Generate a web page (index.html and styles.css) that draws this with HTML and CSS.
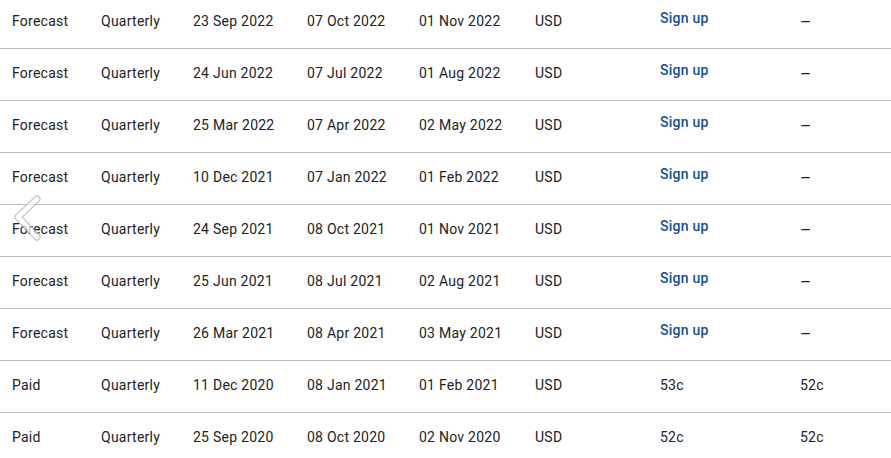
FILE: index.html
```html
<!DOCTYPE html>
<html>
<head>
<meta charset="utf-8">
<link rel="stylesheet" href="styles.css">
</head>
<body>
<div class="page">
  <div class="table">
    <div class="row"><span>Forecast</span><span>Quarterly</span><span>23 Sep 2022</span><span>07 Oct 2022</span><span>01 Nov 2022</span><span>USD</span><a class="signup">Sign up</a><span class="dash">–</span></div>
    <div class="row"><span>Forecast</span><span>Quarterly</span><span>24 Jun 2022</span><span>07 Jul 2022</span><span>01 Aug 2022</span><span>USD</span><a class="signup">Sign up</a><span class="dash">–</span></div>
    <div class="row"><span>Forecast</span><span>Quarterly</span><span>25 Mar 2022</span><span>07 Apr 2022</span><span>02 May 2022</span><span>USD</span><a class="signup">Sign up</a><span class="dash">–</span></div>
    <div class="row"><span>Forecast</span><span>Quarterly</span><span>10 Dec 2021</span><span>07 Jan 2022</span><span>01 Feb 2022</span><span>USD</span><a class="signup">Sign up</a><span class="dash">–</span></div>
    <div class="row"><span>Forecast</span><span>Quarterly</span><span>24 Sep 2021</span><span>08 Oct 2021</span><span>01 Nov 2021</span><span>USD</span><a class="signup">Sign up</a><span class="dash">–</span></div>
    <div class="row"><span>Forecast</span><span>Quarterly</span><span>25 Jun 2021</span><span>08 Jul 2021</span><span>02 Aug 2021</span><span>USD</span><a class="signup">Sign up</a><span class="dash">–</span></div>
    <div class="row"><span>Forecast</span><span>Quarterly</span><span>26 Mar 2021</span><span>08 Apr 2021</span><span>03 May 2021</span><span>USD</span><a class="signup">Sign up</a><span class="dash">–</span></div>
    <div class="row"><span>Paid</span><span>Quarterly</span><span>11 Dec 2020</span><span>08 Jan 2021</span><span>01 Feb 2021</span><span>USD</span><span>53c</span><span>52c</span></div>
    <div class="row"><span>Paid</span><span>Quarterly</span><span>25 Sep 2020</span><span>08 Oct 2020</span><span>02 Nov 2020</span><span>USD</span><span>52c</span><span>52c</span></div>
  </div>
  <svg class="prev" width="34" height="50" viewBox="0 0 34 50">
    <polyline points="26,6 7,24 26,44" fill="none" stroke="#9e9e9e" stroke-width="7" stroke-linecap="round" stroke-linejoin="round"/>
    <polyline points="26,6 7,24 26,44" fill="none" stroke="#ffffff" stroke-width="5" stroke-linecap="round" stroke-linejoin="round"/>
  </svg>
</div>
</body>
</html>
```

FILE: styles.css
```css
html, body {
  margin: 0;
  padding: 0;
  background: #ffffff;
}
body {
  font-family: Roboto, "Liberation Sans", sans-serif;
  font-size: 14px;
  letter-spacing: 0.25px;
  color: #222222;
  overflow: hidden;
}
.page {
  position: relative;
  width: 891px;
}
.table {
  margin-top: -3px;
}
.row {
  display: grid;
  grid-template-columns: 89px 92px 114px 112px 116px 125px 140px 1fr;
  align-items: center;
  height: 47px;
  padding: 0 0 4px 12px;
  border-bottom: 1px solid #bdbdbd;
}
.signup {
  color: #11508e;
  font-weight: 500;
  margin-bottom: 6px;
  cursor: pointer;
}
.dash {
  font-size: 17px;
  line-height: 14px;
  margin-top: 2px;
}
.prev {
  position: absolute;
  left: 11px;
  top: 196px;
  opacity: 0.7;
}
```
